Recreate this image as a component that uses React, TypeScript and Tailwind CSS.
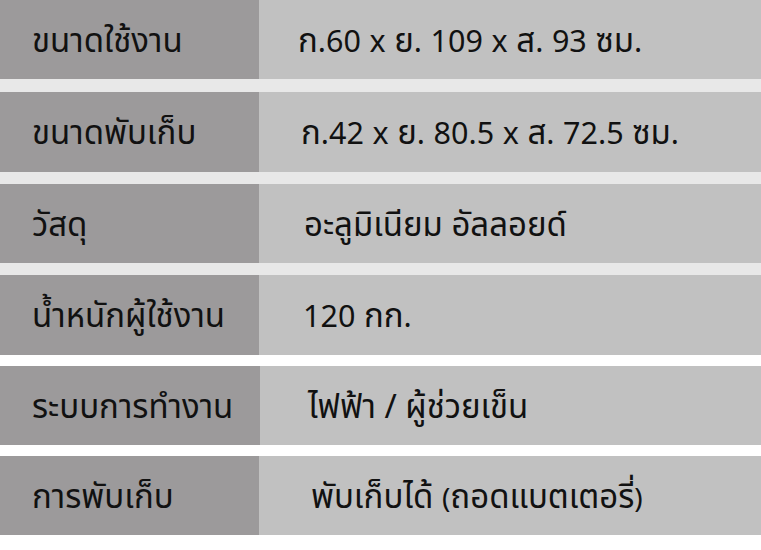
import React from "react";

const rows: { label: string; value: string; pl: string; h: string; sep: string; lw: string }[] = [
  { label: "ขนาดใช้งาน", value: "ก.60 x ย. 109 x ส. 93 ซม.", pl: "pl-[39px]", h: "h-[79px]", sep: "h-[13px] bg-[#e8e8e8]", lw: "w-[259px]" },
  { label: "ขนาดพับเก็บ", value: "ก.42 x ย. 80.5 x ส. 72.5 ซม.", pl: "pl-[42px]", h: "h-[80px]", sep: "h-[12px] bg-[#e8e8e8]", lw: "w-[259px]" },
  { label: "วัสดุ", value: "อะลูมิเนียม อัลลอยด์", pl: "pl-[45px]", h: "h-[79px]", sep: "h-[12px] bg-[#e8e8e8]", lw: "w-[259px]" },
  { label: "น้ำหนักผู้ใช้งาน", value: "120 กก.", pl: "pl-[44px]", h: "h-[80px]", sep: "h-[11px] bg-white", lw: "w-[259px]" },
  { label: "ระบบการทำงาน", value: "ไฟฟ้า / ผู้ช่วยเข็น", pl: "pl-[48px]", h: "h-[79px]", sep: "h-[11px] bg-white", lw: "w-[260px]" },
  { label: "การพับเก็บ", value: "พับเก็บได้ (ถอดแบตเตอรี่)", pl: "pl-[52px]", h: "h-[79px]", sep: "h-[15px] bg-white", lw: "w-[259px]" },
];

function Mixed({ text }: { text: string }) {
  const parts = text.split(/([0-9.x]+|[()]+)/).filter((p) => p.length > 0);
  return (
    <span className="whitespace-pre">
      {parts.map((p, i) =>
        /^[0-9.x]+$/.test(p) ? (
          <span key={i} className="text-[30.5px]">{p}</span>
        ) : /^[()]+$/.test(p) ? (
          <span key={i} className="text-[28px]">{p}</span>
        ) : (
          <span key={i} className="text-[33px]">{p}</span>
        )
      )}
    </span>
  );
}

export default function App() {
  return (
    <div
      className="w-[761px] h-[550px] bg-white flex flex-col leading-none text-[#111]"
      style={{ fontFamily: '"Noto Sans Thai", "Noto Sans", sans-serif' }}
    >
      {rows.map((r, i) => (
        <React.Fragment key={i}>
          <div className={`flex ${r.h}`}>
            <div className={`${r.lw} shrink-0 bg-[#9c9a9b] flex items-center pl-[32px] pt-[5px] text-[33px]`}>{r.label}</div>
            <div className={`flex-1 bg-[#c1c1c1] flex items-center pt-[5px] ${r.pl}`}>
              <Mixed text={r.value} />
            </div>
          </div>
          <div className={r.sep} />
        </React.Fragment>
      ))}
    </div>
  );
}
